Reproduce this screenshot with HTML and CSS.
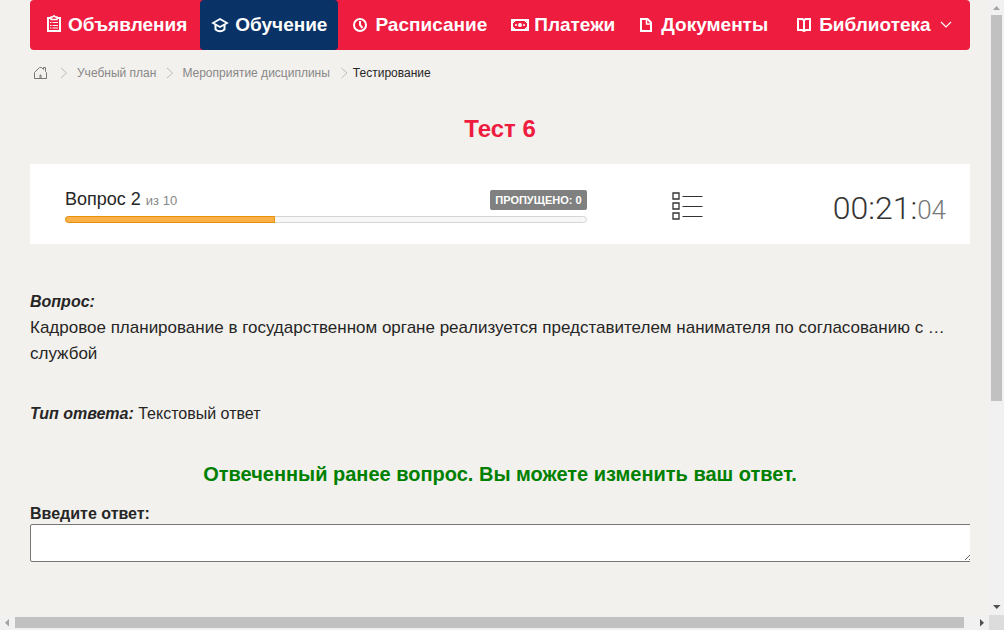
FILE: index.html
```html
<!DOCTYPE html>
<html lang="ru">
<head>
<meta charset="utf-8">
<title>Тест 6</title>
<link rel="stylesheet" href="styles.css">
</head>
<body>
<div class="shell">
  <div class="page">
    <nav class="menu">
      <a class="menu-item" href="#">
        <svg class="icon" width="22" height="20" viewBox="0 0 22 20" fill="none" stroke="#fff"><path d="M2 4h12v13H2z" stroke-width="2"/><path d="M5 5.500V3h1.500L8 1.700 9.500 3H11v2.500z" fill="#ee1c3f" stroke-width="1.400"/><path d="M4 8.500h1.500M6.500 8.500h5.500M4 11.500h1.500M6.500 11.500h5.500M4 14h1.500M6.500 14h5.500" stroke-width="1"/></svg>
        <span>Объявления</span>
      </a>
      <a class="menu-item menu-item-active" href="#">
        <svg class="icon" width="24" height="20" viewBox="0 0 24 20" fill="none" stroke="#fff"><path d="M2 9l7-4 7 4-7 4z" stroke-width="1.800"/><path d="M4.500 11v4.500Q9 19 13.500 15.500V11" stroke-width="2"/></svg>
        <span>Обучение</span>
      </a>
      <a class="menu-item" href="#">
        <svg class="icon" width="24" height="20" viewBox="0 0 24 20" fill="none" stroke="#fff" stroke-width="2"><circle cx="9" cy="11" r="6"/><path d="M9 7v4l2.500 3"/></svg>
        <span>Расписание</span>
      </a>
      <a class="menu-item" href="#">
        <svg class="icon" width="23" height="20" viewBox="0 0 23 20" fill="none" stroke="#fff" stroke-width="2"><path d="M1 6h16v10H1z"/><path d="M2 7h2L2 9zM16 7v2l-2-2zM2 15v-2l2 2zM16 15h-2l2-2z" stroke-width="1"/><circle cx="9" cy="11" r="1" /><path d="M4 11h2M12 11H14" stroke-width="1.500"/></svg>
        <span>Платежи</span>
      </a>
      <a class="menu-item" href="#">
        <svg class="icon" width="22" height="20" viewBox="0 0 22 20" fill="none" stroke="#fff" stroke-width="2"><path d="M2 5h6.500l3.500 3.500V17H2z"/><path d="M7.500 5v5H12" stroke-width="1.500"/></svg>
        <span>Документы</span>
      </a>
      <a class="menu-item menu-item-last" href="#">
        <svg class="icon" width="22" height="20" viewBox="0 0 22 20" fill="none" stroke="#fff" stroke-width="2"><path d="M1 5h4.500L7 6.500 8.500 5H13v11H9l-2 1-2-1H1zM7 6v11"/></svg>
        <span>Библиотека</span>
        <svg class="chevron" width="12" height="8" viewBox="0 0 12 8" fill="none" stroke="#fff" stroke-width="1.200"><path d="M1 1l5 5 5-5"/></svg>
      </a>
    </nav>

    <nav class="crumbs" aria-label="Навигация">
      <a class="crumb-home" href="#" aria-label="Главная"><svg width="13" height="13" viewBox="0 0 13 13" fill="none" stroke="#777"><path d="M.5 11.500V5.500L5.500.5h2L9.500 2.500V.5h2v4l1 1v6z"/><path d="M6 11.500V8h1v3.500"/></svg></a>
      <svg class="crumb-sep" width="8" height="12" viewBox="0 0 8 12" fill="none" stroke="#bbb"><path d="M1 1l5.500 5L1 11"/></svg>
      <a class="crumb" href="#">Учебный план</a>
      <svg class="crumb-sep" width="8" height="12" viewBox="0 0 8 12" fill="none" stroke="#bbb"><path d="M2 1l5.500 5L2 11"/></svg>
      <a class="crumb" href="#">Мероприятие дисциплины</a>
      <svg class="crumb-sep" width="8" height="12" viewBox="0 0 8 12" fill="none" stroke="#bbb"><path d="M2.500 1L8 6l-5.500 5"/></svg>
      <span class="crumb-current">Тестирование</span>
    </nav>

    <main>
      <h1 class="title">Тест 6</h1>

      <section class="status">
        <div class="progress-block">
          <div class="progress-head">
            <span class="counter">Вопрос 2 <small class="counter-total">из 10</small></span>
            <span class="badge">Пропущено: 0</span>
          </div>
          <div class="progress"><div class="progress-value"></div></div>
        </div>
        <button class="list-button" type="button" aria-label="Список вопросов">
          <svg width="32" height="28" viewBox="0 0 32 28" fill="none" stroke="#333"><path d="M1 1h6v6H1zM1 11h6v6H1zM1 21h6v6H1z" stroke-width="1.300"/><path d="M10.500 4.500h20M10.500 14.500h20M10.500 24.500h20" stroke-width="1.200"/></svg>
        </button>
        <div class="timer">00:21:<span class="timer-seconds">04</span></div>
      </section>

      <section class="question">
        <h2 class="label">Вопрос:</h2>
        <p class="question-text">Кадровое планирование в государственном органе реализуется представителем нанимателя по согласованию с … службой</p>
      </section>
      <p class="answer-type"><strong class="label">Тип ответа:</strong> Текстовый ответ</p>

      <p class="notice">Отвеченный ранее вопрос. Вы можете изменить ваш ответ.</p>

      <form class="answer">
        <label class="answer-label" for="answer">Введите ответ:</label>
        <textarea class="answer-input" id="answer"></textarea>
      </form>
    </main>
  </div>

  <div class="bar bar-vertical">
    <svg width="15" height="15" viewBox="0 0 15 15"><path d="M4 10l3.500-4 3.500 4z" fill="#a3a3a3"/></svg>
    <div class="track"><div class="thumb thumb-vertical"></div></div>
    <svg width="15" height="15" viewBox="0 0 15 15"><path d="M4 5h7.500L7.750 9z" fill="#505050"/></svg>
  </div>
  <div class="bar bar-horizontal">
    <svg width="15" height="15" viewBox="0 0 15 15"><path d="M9 4v7.500L5 7.750z" fill="#a3a3a3"/></svg>
    <div class="track"><div class="thumb thumb-horizontal"></div></div>
    <svg width="15" height="15" viewBox="0 0 15 15"><path d="M6 4v7.500l4-3.750z" fill="#505050"/></svg>
  </div>
  <div class="bar-corner"></div>
</div>
</body>
</html>
```

FILE: styles.css
```css
* { box-sizing: border-box; }

body {
  margin: 0;
  background: #f3f1ed;
  color: #262626;
  font: 16px/26px "Liberation Sans", Arial, sans-serif;
}

h1, h2, p { margin: 0; }

a { color: inherit; text-decoration: none; }

.shell {
  display: grid;
  grid-template: minmax(0, 1fr) 15px / minmax(0, 1fr) 15px;
  height: 100vh;
}

.page {
  overflow: hidden;
  padding: 0 19px 0 30px;
}

/* Top menu */
.menu {
  display: flex;
  gap: 2px;
  padding-left: 5px;
  height: 50px;
  background: #ee1c3f;
  border-radius: 4px;
  color: #fff;
  font-size: 19px;
  font-weight: bold;
  white-space: nowrap;
}

.menu-item {
  display: flex;
  align-items: center;
  padding: 0 11px;
  border-radius: 4px;
}

.menu-item-active { background: #093267; }
.menu-item-last { padding-left: 16px; }
.icon { flex: none; margin-bottom: 2px; }
.chevron { margin-left: 9px; }

/* Breadcrumbs */
.crumbs {
  display: flex;
  align-items: center;
  gap: 9px;
  padding: 0 4px;
  height: 46px;
  color: #888;
  font-size: 12px;
}

.crumb-home { display: flex; margin-right: 4px; }
.crumb-current { color: #262626; margin-left: -3px; }

.title {
  margin-top: 16px;
  color: #ee1c3f;
  font-size: 24px;
  line-height: 34px;
  text-align: center;
}

/* Progress and timer */
.status {
  display: flex;
  align-items: center;
  margin-top: 18px;
  padding: 0 24px 0 35px;
  height: 80px;
  background: #fff;
}

.progress-block { flex: 0 0 calc(60% - 7px); }

.progress-head {
  display: flex;
  justify-content: space-between;
  align-items: center;
}

.counter { font-size: 18px; }
.counter-total { color: #888; font-size: 13px; }

.badge {
  padding: 0 5px;
  border-radius: 2px;
  background: #808080;
  color: #fff;
  font-size: 11px;
  font-weight: bold;
  line-height: 20px;
  text-transform: uppercase;
}

.progress {
  margin-top: 2px;
  height: 7px;
  border: 1px solid #d5d5d5;
  border-radius: 4px;
  background: #f7f7f7;
}

.progress-value {
  width: 210px;
  height: 7px;
  margin: -1px;
  border: 1px solid #e78f08;
  border-radius: 4px 0 0 4px;
  background: #f9b148;
}

.list-button {
  display: flex;
  margin-left: 85px;
  padding: 4px 0 0;
  border: 0;
  background: none;
}

.timer {
  margin-left: auto;
  padding-top: 10px;
  color: #333;
  font: 300 32px/40px Roboto, sans-serif;
}

.timer-seconds { color: #777; font-size: 26px; }

/* Question */
.question { margin-top: 45px; }

.label {
  font-size: 16px;
  font-style: italic;
  font-weight: bold;
}

.question-text { font-size: 17px; }
.answer-type { margin-top: 34px; }

.notice {
  margin-top: 34px;
  color: #008000;
  font-size: 20px;
  font-weight: bold;
  text-align: center;
}

.answer {
  margin-top: 16px;
  overflow: hidden;
}

.answer-label {
  display: block;
  font-weight: bold;
  line-height: 21px;
}

.answer-input {
  display: block;
  width: calc(100% + 4px);
  height: 38px;
  border: 1px solid #767676;
  border-radius: 2px;
  background: #fff;
}

/* Scroll bars */
.bar { display: flex; background: #f1f1f1; }
.bar svg { display: block; flex: none; }
.bar-vertical { flex-direction: column; }
.track { display: flex; flex: 1; }
.bar-vertical .track { flex-direction: column; padding: 0 2px; }
.bar-horizontal .track { padding: 2px 0; }
.thumb { background: #c1c1c1; }
.thumb-vertical { height: 66%; }
.thumb-horizontal { width: 99%; }
.bar-corner { background: #dcdcdc; }
```
